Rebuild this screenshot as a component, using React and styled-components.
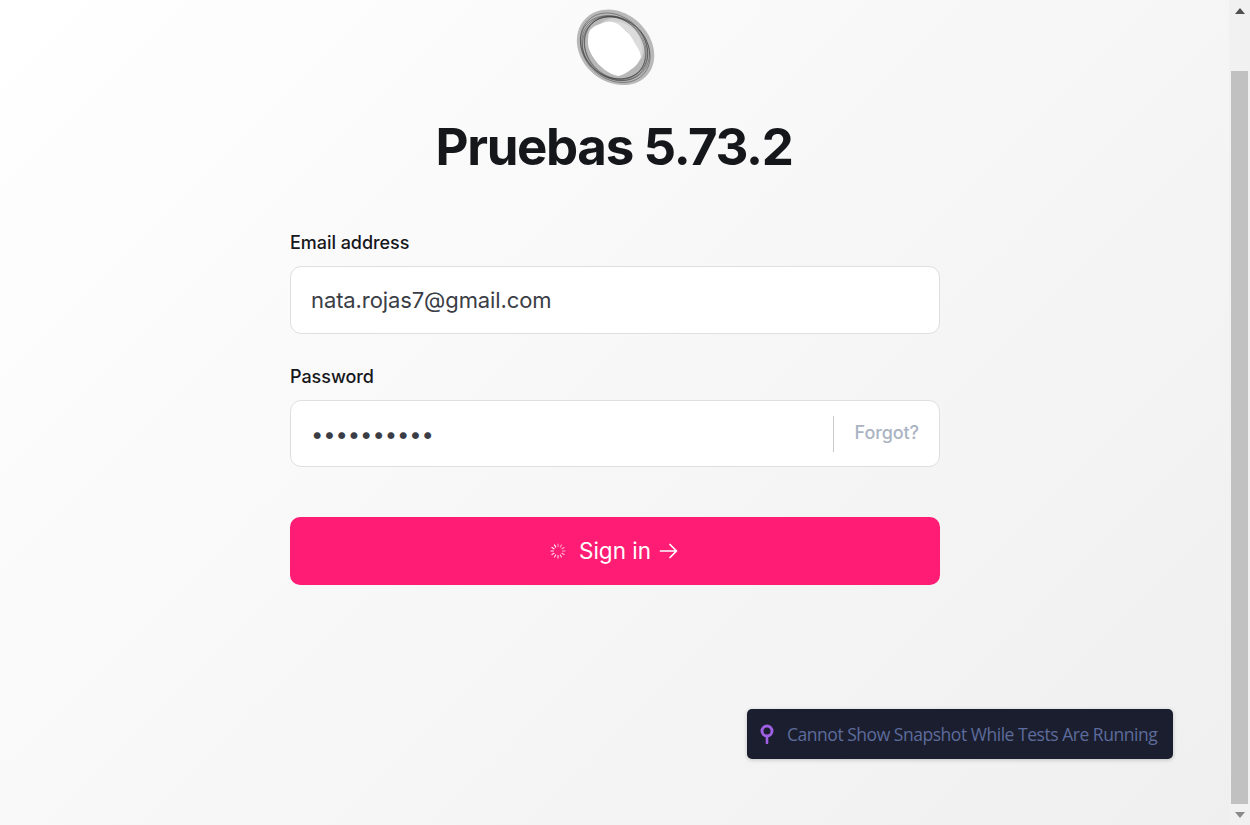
import React from 'react';
import styled, { createGlobalStyle } from 'styled-components';

const GlobalStyle = createGlobalStyle`
  html, body { margin: 0; padding: 0; height: 100%; overflow: hidden; }
  body { font-family: 'Inter', 'Liberation Sans', sans-serif; }
  #root { height: 100%; }
`;

const Page = styled.div`
  position: relative;
  display: flex;
  height: 825px;
  background: linear-gradient(135deg, #ffffff 0%, #efefef 100%);
`;

const Main = styled.main`
  flex: 1;
  display: flex;
  flex-direction: column;
  align-items: center;
  padding: 10px 0 0 1px;
`;

const Title = styled.h1`
  margin: 29px 2px 0 0;
  font-size: 51px;
  line-height: 64px;
  font-weight: 700;
  letter-spacing: -1.35px;
  color: #16171b;
`;

const Form = styled.form`
  width: 650px;
  margin-top: 52px;
  display: flex;
  flex-direction: column;
`;

const Field = styled.div`
  margin-bottom: 31px;
`;

const Label = styled.label`
  display: block;
  font-size: 18px;
  line-height: 24px;
  font-weight: 500;
  letter-spacing: -0.05px;
  color: #16171b;
  margin-bottom: 11px;
`;

const InputWrap = styled.div`
  display: flex;
  align-items: center;
  height: ${p => p.$h}px;
  box-sizing: border-box;
  background: #fff;
  border: 1px solid #dedfe1;
  border-radius: 11px;
  padding: 0 20px;
`;

const Input = styled.input`
  flex: 1;
  min-width: 0;
  border: 0;
  outline: 0;
  padding: 0;
  background: transparent;
  font-family: 'Inter', sans-serif;
  font-size: 22px;
  letter-spacing: -0.1px;
  color: #3a3d45;
`;

const Forgot = styled.a`
  align-self: center;
  height: 36px;
  line-height: 34px;
  padding-left: 21px;
  border-left: 1px solid #c9cacc;
  font-size: 18px;
  font-weight: 500;
  letter-spacing: -0.1px;
  color: #aab3c3;
`;

const SubmitButton = styled.button`
  height: 68px;
  margin-top: 19px;
  border: 0;
  border-radius: 10px;
  background: #ff1c74;
  color: #fff;
  font-family: 'Inter', sans-serif;
  font-size: 22.5px;
  line-height: 26px;
  display: flex;
  align-items: center;
  justify-content: center;
  gap: 13px;
  padding: 0 2px 1px 0;
`;

const ButtonLabel = styled.span`
  display: flex;
  align-items: center;
  gap: 8px;
`;

const Toast = styled.div`
  position: absolute;
  left: 747px;
  top: 709px;
  width: 426px;
  height: 50px;
  box-sizing: border-box;
  display: flex;
  align-items: center;
  gap: 13px;
  padding-left: 13px;
  background: #1b1e2e;
  border-radius: 5px;
  box-shadow: 0 1px 4px rgba(0, 0, 0, 0.2);
  font-family: 'Open Sans', sans-serif;
  font-size: 17.5px;
  letter-spacing: -0.47px;
  color: #5d6c9c;
  white-space: nowrap;
`;

const ScrollBar = styled.div`
  width: 21px;
  background: #f1f1f1;
  display: flex;
  flex-direction: column;
  align-items: center;
`;

const ScrollButton = styled.div`
  height: ${p => p.$h}px;
  flex: none;
  display: flex;
  align-items: center;
  justify-content: center;
`;

const Thumb = styled.div`
  width: 17px;
  flex: 1;
  background: #c1c1c1;
`;

// wobbly closed ring strand, tilted ellipse with a bit of sine noise
const strand = (rx, ry, rot, wobble, phase, cx = 42, cy = 38) => {
  const a = (rot * Math.PI) / 180;
  const pts = [];
  for (let i = 0; i < 72; i++) {
    const t = (i / 72) * Math.PI * 2;
    const k = 1 + wobble * Math.sin(2 * t + phase) + wobble * 0.5 * Math.sin(3 * t + phase * 2);
    const x = rx * k * Math.cos(t);
    const y = ry * k * Math.sin(t);
    pts.push(`${(cx + x * Math.cos(a) - y * Math.sin(a)).toFixed(2)} ${(cy + x * Math.sin(a) + y * Math.cos(a)).toFixed(2)}`);
  }
  return `M${pts.join('L')}Z`;
};

const STRANDS = [
  [38, 31, 44, 0.015, 1.4], [36.5, 30, 40, 0.015, 2.5], [35.5, 29.5, 46, 0.015, 3.3],
  [34.5, 29, 38, 0.015, 4.2], [34, 28, 43, 0.015, 5.2], [33.5, 28, 48, 0.012, 0.9],
];

const Logo = () => (
  <svg width="84" height="76" viewBox="0 0 84 76" fill="none" style={{ filter: 'blur(0.7px)', overflow: 'visible' }}>
    <path d={strand(41.5, 34.5, 40, 0.01, 1, 42.5, 37.5)} fill="#a8a8a8" fillOpacity="0.8" />
    <path
      d="M27 14 C32 9 38 8 44 8 C52 8 62 13 68 22 C73 30 73 40 68 50 C63 42 60 30 54 22 C50 18 46 13 40 12 C36 11 31 12 27 14 Z"
      fill="#cfcfcf"
    />
    <g stroke="#303030" strokeWidth="1" strokeOpacity="0.45">
      {STRANDS.map((s, i) => (
        <path key={i} d={strand(...s)} />
      ))}
    </g>
    <path
      d="M17 20 C20 17 23 15 27 14 C31 12 36 11 40 12 C46 13 50 18 54 22 C59 26 60 30 62 33 C65 38 68 42 68 47 C66 52 64 55 60 58 C55 62 50 65 45 66 C40 65 36 63 32 60 C27 56 23 52 20 47 C17 42 15 38 15 33 C15 28 15 24 17 20 Z"
      fill="#ffffff"
    />
    <path
      d="M40 12 C46 13 50 18 54 22 C59 26 60 30 62 33 C65 38 68 42 68 47 C70 40 69 30 63 22 C57 15 48 11 40 12 Z"
      fill="#dcdcdc"
    />
  </svg>
);

const Spinner = () => (
  <svg width="16" height="16" viewBox="0 0 16 16" stroke="#fff" strokeWidth="1.2" strokeLinecap="round">
    {Array.from({ length: 12 }).map((_, i) => (
      <line key={i} x1="8" y1="1" x2="8" y2="3.4" opacity={0.5 + i * 0.045} transform={`rotate(${i * 30} 8 8)`} />
    ))}
  </svg>
);

const Arrow = () => (
  <svg width="19" height="18" viewBox="0 0 19 18" fill="none" stroke="#fff" strokeWidth="1.7" strokeLinecap="round" strokeLinejoin="round">
    <path d="M1.5 9h16M11 2.5L17.5 9 11 15.5" />
  </svg>
);

const Pin = () => (
  <svg width="14" height="20" viewBox="0 0 14 20" fill="none">
    <circle cx="7" cy="7" r="5" stroke="#9f5fe3" strokeWidth="3" />
    <path d="M7 13v6" stroke="#9f5fe3" strokeWidth="2.6" strokeLinecap="round" />
  </svg>
);

const ArrowGlyph = ({ down }) => (
  <svg width="10" height="6" viewBox="0 0 10 6">
    <path d={down ? 'M0 0h10L5 6z' : 'M0 6h10L5 0z'} fill={down ? '#8a8a8a' : '#505050'} />
  </svg>
);

export default function App() {
  return (
    <Page>
      <GlobalStyle />
      <Main>
        <Logo />
        <Title>Pruebas 5.73.2</Title>
        <Form onSubmit={e => e.preventDefault()}>
          <Field>
            <Label>Email address</Label>
            <InputWrap $h={68}>
              <Input type="email" readOnly value="nata.rojas7@gmail.com" />
            </InputWrap>
          </Field>
          <Field>
            <Label>Password</Label>
            <InputWrap $h={67}>
              <Input type="password" readOnly value="0123456789" />
              <Forgot>Forgot?</Forgot>
            </InputWrap>
          </Field>
          <SubmitButton type="submit">
            <Spinner />
            <ButtonLabel>Sign in <Arrow /></ButtonLabel>
          </SubmitButton>
        </Form>
      </Main>
      <ScrollBar>
        <ScrollButton $h={21}><ArrowGlyph /></ScrollButton>
        <ScrollButton $h={50} />
        <Thumb />
        <ScrollButton $h={21}><ArrowGlyph down /></ScrollButton>
      </ScrollBar>
      <Toast>
        <Pin />
        Cannot Show Snapshot While Tests Are Running
      </Toast>
    </Page>
  );
}
